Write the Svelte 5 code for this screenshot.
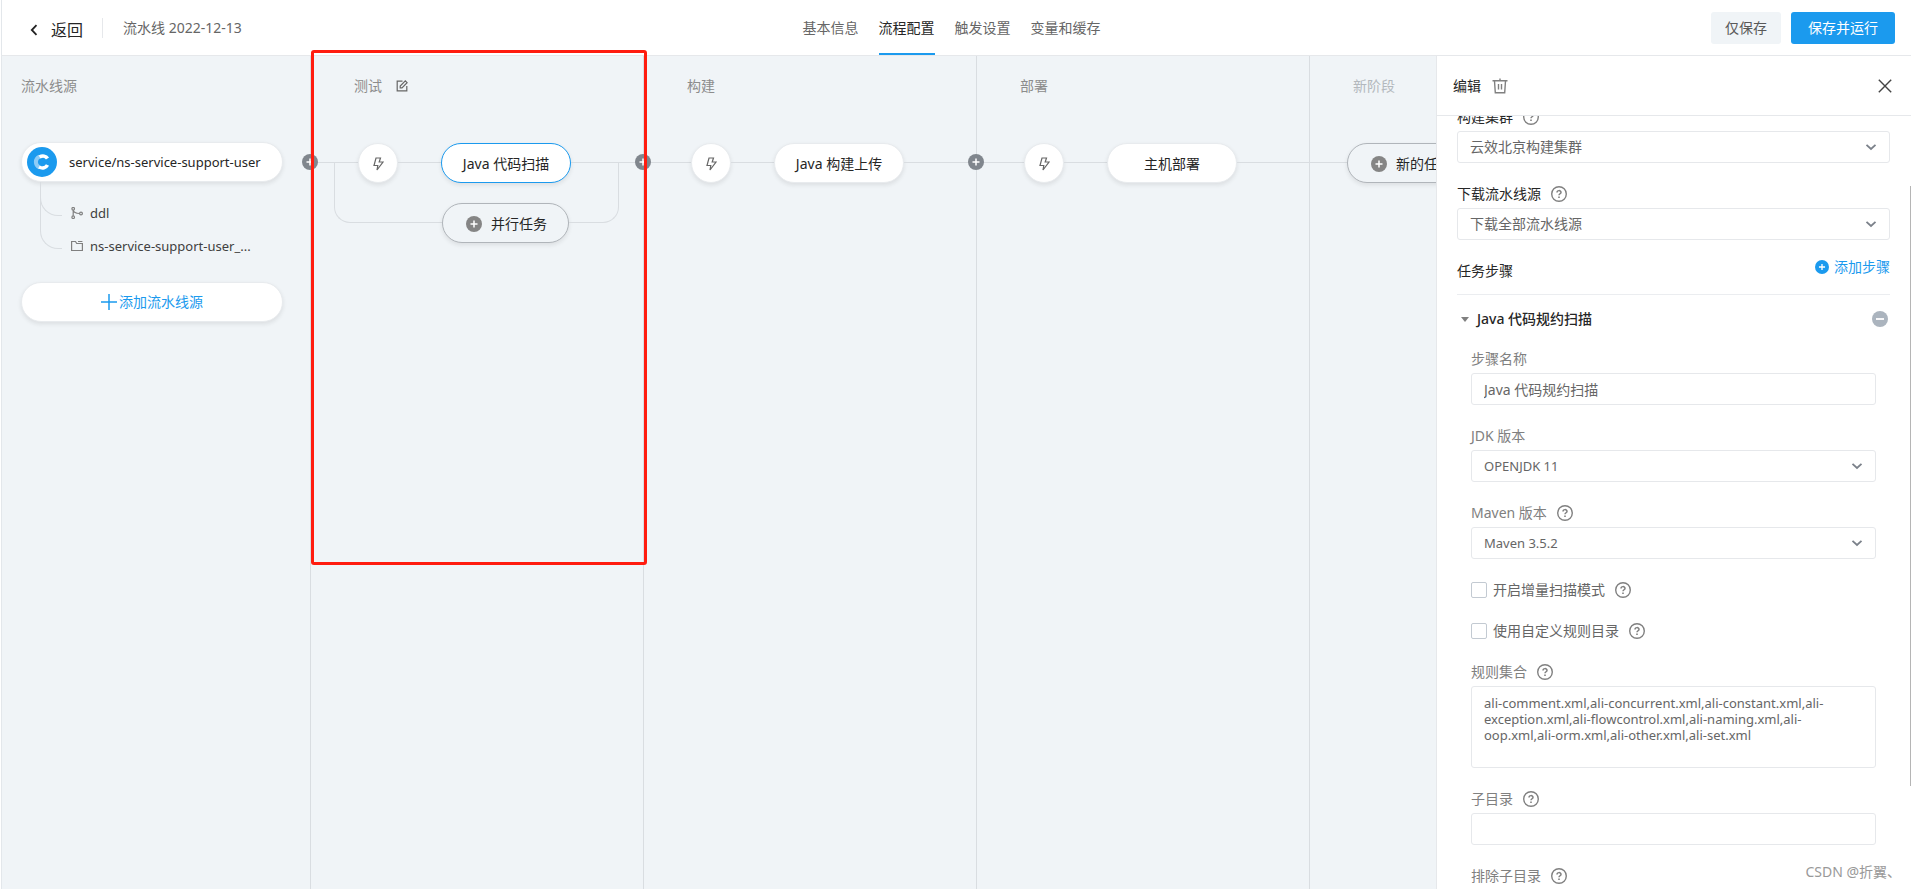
<script>
  import { onMount } from 'svelte';

  const tabs = ['基本信息', '流程配置', '触发设置', '变量和缓存'];
  let activeTab = $state('流程配置');

  const stages = [
    { title: '测试', job: 'Java 代码扫描', selected: true },
    { title: '构建', job: 'Java 构建上传' },
    { title: '部署', job: '主机部署' },
  ];

  let stepName = $state('Java 代码规约扫描');
  let subDir = $state('');
  let excludeDir = $state('');
  let incremental = $state(false);
  let customRules = $state(false);
  let ruleSet = $state(
    'ali-comment.xml,ali-concurrent.xml,ali-constant.xml,ali-exception.xml,ali-flowcontrol.xml,ali-naming.xml,ali-oop.xml,ali-orm.xml,ali-other.xml,ali-set.xml'
  );

  let drawerBody;
  let thumb = $state({ top: 0, height: 0 });

  function updateThumb() {
    const { scrollTop, scrollHeight, clientHeight } = drawerBody;
    thumb = {
      top: (scrollTop / scrollHeight) * 100,
      height: (clientHeight / scrollHeight) * 100,
    };
  }

  onMount(() => {
    drawerBody.scrollTop = 90;
    updateThumb();
  });
</script>

<svelte:window onresize={updateThumb} />

{#snippet plus()}
  <svg class="plus" viewBox="0 0 16 16" aria-hidden="true">
    <circle cx="8" cy="8" r="8" fill="currentColor" />
    <path d="M8 4.500v7M4.500 8h7" stroke="#fff" stroke-width="1.500" />
  </svg>
{/snippet}

{#snippet help()}
  <svg class="help" viewBox="0 0 16 16" fill="none" stroke="#808080" aria-hidden="true">
    <circle cx="8" cy="8" r="7.300" stroke-width="1.400" />
    <path d="M6 6.600c0-2.600 4-2.600 4-.2 0 1.300-2 1.400-2 2.900" stroke-width="1.500" />
    <path d="M8 10.600v1.500" stroke-width="1.600" />
  </svg>
{/snippet}

{#snippet chevron()}
  <svg class="chevron" viewBox="0 0 12 12" fill="none" aria-hidden="true">
    <path d="M1.500 3.800 6 8l4.500-4.200" stroke="#7b818a" stroke-width="1.800" />
  </svg>
{/snippet}

{#snippet picker(id, label, value, withHelp, latin)}
  <div class="field">
    <div class="label"><label for={id}>{label}</label>{#if withHelp}{@render help()}{/if}</div>
    <div class="select">
      <select {id} class:latin><option>{value}</option></select>
      {@render chevron()}
    </div>
  </div>
{/snippet}

<div class="page">
  <header>
    <div class="left">
      <a class="back" href="#back">
        <svg viewBox="0 0 8 12" fill="none" aria-hidden="true">
          <path d="M6.500 1.200 1.800 6l4.700 4.800" stroke="#222" stroke-width="1.800" />
        </svg>
        返回
      </a>
      <span class="name">流水线 2022-12-13</span>
    </div>
    <nav>
      {#each tabs as tab}
        <button class="tab" class:active={tab === activeTab} onclick={() => (activeTab = tab)}>{tab}</button>
      {/each}
    </nav>
    <div class="actions">
      <button class="btn">仅保存</button>
      <button class="btn primary">保存并运行</button>
    </div>
  </header>

  <main>
    <div class="canvas">
      <section class="sources">
        <h2>流水线源</h2>
        <button class="pill source latin">
          <svg class="logo" viewBox="0 0 30 30" aria-hidden="true">
            <circle cx="15" cy="15" r="15" fill="#1b9aee" />
            <path d="M12.500 9.500a6 6 0 0 0 0 11" fill="none" stroke="#8dccf7" stroke-width="4" />
            <path d="M20.500 11.500c-1.500-2.500-5-3.200-8-1.500M20.500 18c-1.500 2.800-5 3.800-8.500 2" fill="none" stroke="#fff" stroke-width="3.600" />
          </svg>
          service/ns-service-support-user
        </button>
        <ul class="latin">
          <li>
            <svg viewBox="0 0 12 12" fill="none" stroke="#808080" stroke-width="1.200" aria-hidden="true">
              <circle cx="2.200" cy="1.800" r="1.300" />
              <circle cx="2.200" cy="10.200" r="1.300" />
              <circle cx="10" cy="6.500" r="1.400" />
              <path d="M2.200 3.200v5.600M2.200 3.200c.5 2.500 2.500 3.300 6.300 3.300" />
            </svg>
            ddl
          </li>
          <li>
            <svg viewBox="0 0 12 12" fill="none" stroke="#808080" stroke-width="1.200" aria-hidden="true">
              <path d="M.6 1.500h3.900l1.200 2h5.700v7H.6zM7 1.500h4.400" />
            </svg>
            ns-service-support-user_...
          </li>
        </ul>
        <button class="pill add-source">
          <svg viewBox="0 0 16 16" aria-hidden="true">
            <path d="M8 0v16M0 8h16" stroke="#1b9aee" stroke-width="1.500" />
          </svg>
          添加流水线源
        </button>
      </section>

      {#each stages as stage}
        <section class="stage">
          <h2>
            {stage.title}
            {#if stage.selected}
              <svg viewBox="0 0 12 12" fill="none" stroke="#666" stroke-width="1.200" aria-hidden="true">
                <path d="M6.500 1.200H1.200v9.600h9.600V6" />
                <path d="M4.200 7.800V6L9.300.9l1.800 1.800L6 7.800z" />
              </svg>
            {/if}
          </h2>
          <button class="insert" aria-label="添加阶段">{@render plus()}</button>
          <div class="track">
            <span class="wire lead"></span>
            <button class="trigger" aria-label="触发">
              <svg viewBox="0 0 12 14" fill="none" stroke="#666" stroke-width="1.200" aria-hidden="true">
                <path d="M4 1h4.500L7.200 5H11l-6 8 .8-4.500H2z" />
              </svg>
            </button>
            <span class="wire gap"></span>
            <button class="pill job" class:selected={stage.selected}>{stage.job}</button>
            <span class="wire rest"></span>
          </div>
          {#if stage.selected}
            <div class="branch">
              <span class="elbow in"></span>
              <button class="pill ghost">{@render plus()}并行任务</button>
              <span class="elbow out"></span>
            </div>
            <div class="marker"></div>
          {/if}
        </section>
      {/each}

      <section class="stage new">
        <h2>新阶段</h2>
        <div class="track">
          <span class="wire short"></span>
          <button class="pill ghost">{@render plus()}新的任务</button>
        </div>
      </section>
    </div>

    <aside>
      <div class="drawer-head">
        <h3>编辑</h3>
        <button class="icon" aria-label="删除">
          <svg class="trash" viewBox="0 0 16 16" fill="none" stroke="#808080" stroke-width="1.400" aria-hidden="true">
            <path d="M.5 2.700h15M8 .5v2M2.500 3l.8 11.800h9.400L13.500 3M6.500 6v5.500M9.500 6v5.500" />
          </svg>
        </button>
        <button class="icon close" aria-label="关闭">
          <svg viewBox="0 0 14 14" fill="none" stroke="#444" stroke-width="1.400" aria-hidden="true">
            <path d="M.8.8l12.400 12.400M13.200.8.8 13.200" />
          </svg>
        </button>
      </div>

      <div class="drawer-body" bind:this={drawerBody} onscroll={updateThumb}>
        {@render picker('cluster', '构建集群', '云效北京构建集群', true)}
        {@render picker('download', '下载流水线源', '下载全部流水线源', true)}

        <div class="steps-head">
          <span>任务步骤</span>
          <button class="link">{@render plus()}添加步骤</button>
        </div>

        <div class="step-title">
          <span class="caret"></span>
          <strong>Java 代码规约扫描</strong>
          <button class="icon" aria-label="移除步骤">
            <svg class="plus" viewBox="0 0 16 16" aria-hidden="true">
              <circle cx="8" cy="8" r="8" fill="#abb4be" />
              <path d="M4 8h8" stroke="#fff" stroke-width="1.800" />
            </svg>
          </button>
        </div>

        <div class="step">
          <div class="field">
            <div class="label"><label for="step-name">步骤名称</label></div>
            <input id="step-name" type="text" bind:value={stepName} />
          </div>
          {@render picker('jdk', 'JDK 版本', 'OPENJDK 11', false, true)}
          {@render picker('maven', 'Maven 版本', 'Maven 3.5.2', true, true)}
          <div class="check">
            <input id="incremental" type="checkbox" bind:checked={incremental} />
            <label for="incremental">开启增量扫描模式</label>
            {@render help()}
          </div>
          <div class="check">
            <input id="custom-rules" type="checkbox" bind:checked={customRules} />
            <label for="custom-rules">使用自定义规则目录</label>
            {@render help()}
          </div>
          <div class="field">
            <div class="label"><label for="rules">规则集合</label>{@render help()}</div>
            <textarea id="rules" class="latin" spellcheck="false" bind:value={ruleSet}></textarea>
          </div>
          <div class="field">
            <div class="label"><label for="sub-dir">子目录</label>{@render help()}</div>
            <input id="sub-dir" type="text" bind:value={subDir} />
          </div>
          <div class="field">
            <div class="label"><label for="exclude-dir">排除子目录</label>{@render help()}</div>
            <input id="exclude-dir" type="text" bind:value={excludeDir} />
          </div>
        </div>
      </div>
      <div class="rail">
        <div class="thumb" style="top: {thumb.top}%; height: {thumb.height}%"></div>
      </div>
    </aside>
  </main>

  <div class="watermark">CSDN @折翼、</div>
</div>

<style>
  :global(body) {
    background: #fff;
  }

  .page {
    display: flex;
    flex-direction: column;
    height: 100vh;
    box-sizing: border-box;
    padding-left: 1px;
    position: relative;
    overflow: hidden;
    font-family: 'Noto Sans', 'Noto Sans CJK SC', sans-serif;
    font-size: 14px;
    line-height: 22px;
    color: #262626;
  }

  .page * {
    box-sizing: border-box;
  }

  button,
  input,
  select,
  textarea {
    font: inherit;
    color: inherit;
    margin: 0;
  }

  button {
    background: none;
    border: 0;
    padding: 0;
    cursor: pointer;
    white-space: nowrap;
  }

  svg {
    display: block;
    flex: none;
  }

  h2,
  h3 {
    margin: 0;
    font-size: 14px;
    font-weight: 400;
  }

  .latin {
    font-size: 13px;
  }

  /* header */
  header {
    flex: none;
    display: grid;
    grid-template-columns: 1fr auto 1fr;
    height: 56px;
    padding: 0 16px 0 6px;
    border-left: 1px solid #e3e7eb;
    border-bottom: 1px solid #e6e8eb;
  }

  .left {
    display: flex;
    align-items: center;
  }

  .back {
    display: flex;
    align-items: center;
    gap: 13px;
    padding: 4px 19px 0 22px;
    color: #262626;
    font-size: 16px;
    text-decoration: none;
  }

  .back svg {
    width: 8px;
    height: 12px;
  }

  .name {
    border-left: 1px solid #e6e8eb;
    padding-left: 20px;
    line-height: 20px;
    color: #666;
  }

  nav {
    display: flex;
    gap: 20px;
  }

  .tab {
    height: 55px;
    border-top: 2px solid transparent;
    border-bottom: 2px solid transparent;
    color: #666;
  }

  .tab.active {
    color: #262626;
    border-bottom-color: #1b9aee;
  }

  .actions {
    display: flex;
    align-items: center;
    justify-content: flex-end;
    gap: 10px;
  }

  .btn {
    height: 32px;
    padding: 0 14px;
    border-radius: 3px;
    background: #f0f4f7;
    color: #595959;
  }

  .btn.primary {
    padding: 0 17px;
    background: #1b9aee;
    color: #fff;
  }

  /* pipeline canvas */
  main {
    flex: 1;
    display: flex;
    min-height: 0;
  }

  .canvas {
    flex: 1;
    display: flex;
    min-width: 0;
    overflow-x: clip;
    background: #f0f4f7;
    border-left: 1px solid #e3e7eb;
  }

  .sources {
    flex: none;
    width: 308px;
    padding: 19px 27px 0 19px;
  }

  h2 {
    display: flex;
    align-items: center;
    gap: 14px;
    color: #8c8c8c;
  }

  h2 svg {
    width: 12px;
    height: 12px;
  }

  .pill {
    display: flex;
    align-items: center;
    justify-content: center;
    height: 40px;
    border: 1px solid #e8ebee;
    border-radius: 20px;
    background: #fff;
    box-shadow: 0 2px 4px rgba(38, 38, 38, 0.1);
    color: #262626;
  }

  .source,
  .add-source {
    width: 100%;
  }

  .source {
    justify-content: flex-start;
    gap: 12px;
    margin-top: 45px;
    padding-left: 5px;
  }

  .logo {
    width: 30px;
    height: 30px;
  }

  ul {
    list-style: none;
    margin: 14px 0 20px 19px;
    padding: 0;
  }

  li {
    display: flex;
    align-items: center;
    gap: 7px;
    height: 33px;
    color: #404040;
  }

  li::before {
    content: '';
    align-self: flex-start;
    width: 21px;
    height: 33px;
    margin: -14px 2px 0 0;
    border-left: 1px solid #d9dde1;
    border-bottom: 1px solid #d9dde1;
    border-bottom-left-radius: 18px;
  }

  /* reach up past the previous curve so the trunk stays unbroken */
  li + li::before {
    height: 53px;
    margin-top: -34px;
  }

  li svg {
    width: 12px;
    height: 12px;
  }

  .add-source {
    gap: 2px;
    color: #1b9aee;
  }

  .add-source svg {
    width: 16px;
    height: 16px;
  }

  .stage {
    flex: none;
    width: 333px;
    position: relative;
    padding-top: 19px;
    border-left: 1px solid #d9dde1;
  }

  .stage h2 {
    padding-left: 43px;
  }

  .new h2 {
    color: #b3b8bd;
  }

  .track {
    display: flex;
    align-items: center;
    margin: 46px 0 0 -1px;
  }

  .wire {
    height: 2px;
    border-top: 1px solid #d9dde1;
  }

  .lead {
    width: 48px;
  }

  .gap {
    width: 43px;
  }

  .short {
    width: 38px;
  }

  .rest {
    flex: 1;
  }

  .trigger {
    display: flex;
    align-items: center;
    justify-content: center;
    width: 40px;
    height: 40px;
    padding-top: 2px;
    border: 1px solid #e8ebee;
    border-radius: 50%;
    background: #fff;
    box-shadow: 0 2px 4px rgba(38, 38, 38, 0.1);
  }

  .trigger svg {
    width: 12px;
    height: 14px;
  }

  .job {
    width: 130px;
    padding-top: 2px;
  }

  .selected {
    border-color: #1b9aee;
  }

  .ghost {
    width: 127px;
    gap: 9px;
    padding: 2px 0 0 2px;
    border-color: #b0b5ba;
    background: #f0f4f7;
  }

  .plus {
    width: 16px;
    height: 16px;
    color: #858585;
  }

  /* sits on the divider between two stages */
  .insert {
    position: absolute;
    left: -9px;
    top: 98px;
    z-index: 1;
  }

  .insert .plus {
    color: #80868d;
  }

  .branch {
    display: flex;
    align-items: flex-end;
    margin: -21px 0 0 23px;
  }

  .branch .ghost {
    margin-top: 41px;
  }

  .elbow {
    height: 61px;
    margin-bottom: 20px;
    border: 0 solid #d9dde1;
    border-bottom-width: 1px;
  }

  .in {
    width: 108px;
    border-left-width: 1px;
    border-bottom-left-radius: 16px;
  }

  .out {
    width: 50px;
    border-right-width: 1px;
    border-bottom-right-radius: 16px;
  }

  /* highlight frame around the stage */
  .marker {
    position: absolute;
    inset: -6px -4px auto 0;
    height: 515px;
    border: 3px solid #ff1c0f;
    border-radius: 3px;
    z-index: 2;
    pointer-events: none;
  }

  /* drawer */
  aside {
    flex: none;
    display: flex;
    flex-direction: column;
    width: 475px;
    background: #fff;
    border-left: 1px solid #e6e8eb;
    position: relative;
    z-index: 3;
  }

  .drawer-head {
    flex: none;
    display: flex;
    align-items: center;
    gap: 11px;
    height: 60px;
    padding: 0 19px 0 16px;
    border-bottom: 1px solid #e6e8eb;
  }

  .trash {
    width: 16px;
    height: 16px;
  }

  .close {
    margin-left: auto;
  }

  .close svg {
    width: 14px;
    height: 14px;
  }

  .drawer-body {
    flex: 1;
    min-height: 0;
    overflow-y: auto;
    scrollbar-width: none;
    padding: 80px 21px 80px 20px;
  }

  /* thin scroll indicator over the drawer's right edge */
  .rail {
    position: absolute;
    inset: 60px 0 0 auto;
    width: 1px;
  }

  .thumb {
    position: absolute;
    width: 1px;
    background: #b5b5b5;
  }

  .field {
    margin-bottom: 20px;
  }

  .label {
    display: flex;
    align-items: center;
    gap: 10px;
    margin-bottom: 3px;
  }

  .help {
    width: 16px;
    height: 16px;
  }

  .select {
    position: relative;
  }

  .chevron {
    position: absolute;
    right: 13px;
    top: 10px;
    width: 12px;
    height: 12px;
    pointer-events: none;
  }

  input[type='text'],
  select,
  textarea {
    display: block;
    width: 100%;
    height: 32px;
    padding: 0 12px;
    border: 1px solid #e6e8eb;
    border-radius: 3px;
    background: #fff;
    color: #666;
    appearance: none;
    outline: 0;
  }

  textarea {
    height: 82px;
    padding: 8px 12px;
    line-height: 16px;
    resize: none;
  }

  select.latin,
  textarea.latin {
    font-size: 13px;
  }

  .steps-head {
    display: flex;
    justify-content: space-between;
    align-items: flex-start;
    height: 35px;
    border-bottom: 1px solid #ebedf0;
  }

  .link {
    display: flex;
    align-items: center;
    gap: 5px;
    margin-top: -4px;
    color: #1b9aee;
  }

  .link .plus {
    width: 14px;
    height: 14px;
    color: #1b9aee;
  }

  .step-title {
    display: flex;
    align-items: center;
    gap: 8px;
    padding: 13px 2px 18px 4px;
  }

  .step-title strong {
    font-weight: 500;
  }

  .step-title .icon {
    margin-left: auto;
  }

  .caret {
    border: 4px solid transparent;
    border-top: 5px solid #808080;
    border-bottom: 0;
  }

  .step {
    padding: 0 14px;
  }

  .step .label {
    color: #808080;
  }

  .check {
    display: flex;
    align-items: center;
    margin-bottom: 19px;
  }

  .check input {
    appearance: none;
    width: 16px;
    height: 16px;
    border: 1px solid #c3cad2;
    border-radius: 2px;
  }

  .check input:checked {
    background: #1b9aee;
  }

  .check label {
    margin: 0 10px 0 6px;
    color: #666;
  }

  /* page credit over the drawer */
  .watermark {
    position: absolute;
    right: 10px;
    bottom: 6px;
    z-index: 4;
    color: #999;
    pointer-events: none;
  }
</style>
